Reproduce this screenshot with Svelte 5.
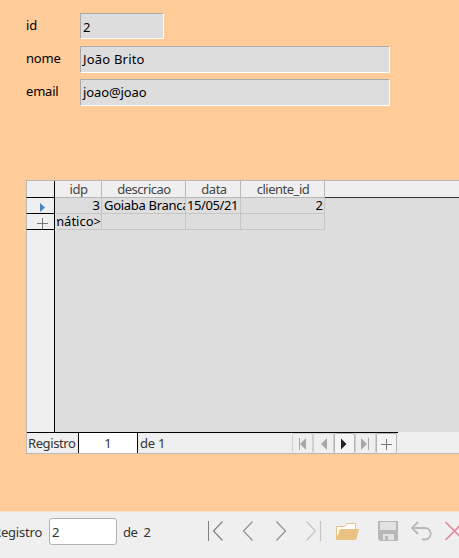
<script>
  const fields = [
    { label: 'id', value: '2', short: true },
    { label: 'nome', value: 'João Brito' },
    { label: 'email', value: 'joao@joao' }
  ];
  const columns = ['idp', 'descricao', 'data', 'cliente_id'];
</script>

<div class="window">
  <main>
    <section class="form">
      {#each fields as f}
        <div class="field" class:short={f.short}>
          <label for={f.label}>{f.label}</label>
          <div class="input" id={f.label}><span class={'v-' + f.label}>{f.value}</span></div>
        </div>
      {/each}
    </section>

    <section class="table">
      <div class="row head">
        <div class="marker"></div>
        {#each columns as c}
          <div class="cell"><span>{c}</span></div>
        {/each}
        <div class="rest"></div>
      </div>
      <div class="row">
        <div class="marker">
          <svg width="28" height="15"><path d="M14 5l5 4.500-5 4.500z" fill="#4a86c0" /></svg>
        </div>
        <div class="cell right"><span>3</span></div>
        <div class="cell"><span class="goiaba">Goiaba Branca</span></div>
        <div class="cell"><span class="date">15/05/21</span></div>
        <div class="cell right"><span>2</span></div>
      </div>
      <div class="row">
        <div class="marker">
          <svg width="28" height="15"><path d="M11 9.500h11M16.500 4v11" stroke="#777" /></svg>
        </div>
        <div class="cell right auto"><span>&lt;AutoCampo automático&gt;</span></div>
        <div class="cell"></div>
        <div class="cell"></div>
        <div class="cell"></div>
      </div>
      <div class="row fill"><div class="marker"></div></div>
      <footer>
        <div class="pager">
          <span class="reg">Registro</span>
          <span class="num">1</span>
          <span class="of">de 1</span>
          <div class="buttons">
            <div class="btn off"><svg width="19" height="20"><path d="M6.500 4v12" stroke="#a8a8a8" /><path d="M13 4v12l-6-6z" fill="#a8a8a8" /></svg></div>
            <div class="btn off"><svg width="19" height="20"><path d="M13 4v12l-6-6z" fill="#a8a8a8" /></svg></div>
            <div class="btn"><svg width="19" height="20"><path d="M6 4.500v11l5.500-5.500z" fill="#222" /></svg></div>
            <div class="btn off"><svg width="19" height="20"><path d="M12.500 4v12" stroke="#a8a8a8" /><path d="M5 4v12l6-6z" fill="#a8a8a8" /></svg></div>
            <div class="btn"><svg width="19" height="20"><path d="M4 10.500h11M9.500 5v11" stroke="#777" /></svg></div>
          </div>
        </div>
      </footer>
    </section>
  </main>

  <nav>
    <span class="reg2">Registro</span>
    <div class="box">2</div>
    <span class="of2">de&nbsp; 2</span>
    <svg class="tools" width="259" height="46" fill="none">
      <g stroke="#808080" stroke-width="1.200">
        <path d="M8.500 9v20" stroke-width="1" />
        <path d="M22.500 9.500l-9 9.500 9 9.500" />
        <path d="M52.500 9.500l-9 9.500 9 9.500" stroke="#929292" />
        <path d="M76.500 9.500l9 9.500-9 9.500" stroke="#929292" />
        <path d="M106.500 9.500l9 9.500-9 9.500M120.500 9v20" stroke="#c4c4c4" />
      </g>
      <path d="M136.500 27.500v-13h8l3-3h8v6" fill="#fff" stroke="#eac282" />
      <path d="M140 17h19l-3 11h-20z" fill="#eac282" />
      <path d="M178 9h20v20h-18l-2-2z" fill="#b8b8b8" />
      <path d="M180 10h16v8h-16zM183 22h11v6h-11z" fill="#e2e2e2" />
      <path d="M185 24h3v4h-3z" fill="#b8b8b8" />
      <path d="M218 10l-6 6 6 6M212 16h13a5.500 5.500 0 0 1 0 11.500h-3" stroke="#b8b8b8" stroke-width="1.800" />
      <path d="M245.500 10l18 18M263.500 10l-18 18" stroke="#e68a9c" stroke-width="1.700" />
    </svg>
  </nav>
</div>

<style>
  .window {
    width: 459px;
    height: 558px;
    overflow: hidden;
    display: flex;
    flex-direction: column;
    background: #ffcc99;
    color: #000;
    font: 13px/16px 'Noto Sans', 'Open Sans', sans-serif;
    white-space: nowrap;
  }
  * { box-sizing: border-box; }
  main { height: 511px; padding: 13px 0 0 26px; }
  .form { height: 167px; display: flex; flex-direction: column; gap: 6px; }
  .field { display: flex; height: 27px; }
  .field.short { padding-bottom: 1px; }
  label { width: 54px; padding-top: 4px; letter-spacing: -0.2px; }
  .input {
    width: 310px;
    padding: 4px 2px;
    background: #ddd;
    border: 1px solid #aaa;
    border-right-color: #fff;
    border-bottom-color: #fff;
  }
  .short .input { width: 84px; padding-top: 5px; }
  .v-nome { letter-spacing: 0.2px; }
  .v-email { letter-spacing: -0.1px; }

  .table {
    width: 433px;
    height: 274px;
    display: flex;
    flex-direction: column;
    background: #ddd;
    border: 1px solid #b8b8b8;
    border-right: 0;
  }
  .row { display: flex; height: 16px; flex: none; }
  .head { height: 17px; color: #444; letter-spacing: -0.5px; }
  .marker {
    width: 29px;
    flex: none;
    margin-left: -1px;
    background: #efefef;
    border-right: 1px solid #000;
    border-bottom: 1px solid #000;
    border-left: 1px solid #b8b8b8;
  }
  .marker svg { display: block; margin-left: -1px; }
  .cell {
    flex: none;
    display: flex;
    overflow: hidden;
    padding: 0 2px;
    line-height: 15px;
    border-right: 1px solid #c6c6c6;
    border-bottom: 1px solid #c6c6c6;
  }
  .cell:nth-child(2) { width: 47px; }
  .cell:nth-child(3) { width: 84px; }
  .cell:nth-child(4) { width: 55px; padding: 0 1px; }
  .cell:nth-child(5) { width: 84px; }
  .right { justify-content: flex-end; padding-right: 1px; }
  .cell.right.auto { padding-right: 0; margin-left: 2px; width: 45px; }
  .goiaba { letter-spacing: -0.3px; }
  .date { letter-spacing: -0.4px; }
  .head .cell { justify-content: center; padding-left: 3px; line-height: 17px; background: #efefef; border-color: #b8b8b8; }
  .rest { flex: 1; background: #efefef; border-bottom: 1px solid #333; }
  .fill { flex: 1; }
  .fill .marker { border-bottom: 0; }
  footer { height: 21px; flex: none; display: flex; background: #efefef; color: #333; }
  .pager { width: 371px; height: 21px; display: flex; border-top: 1px solid #000; line-height: 21px; }
  .reg { width: 52px; padding-left: 1px; letter-spacing: -0.4px; border-right: 1px solid #000; }
  .num { width: 59px; text-align: center; background: #fff; border-right: 1px solid #000; }
  .of { flex: 1; padding-left: 2px; letter-spacing: -0.2px; }
  .buttons { display: flex; margin-right: 1px; }
  .btn { width: 21px; height: 20px; border: 1px solid #b4b4b4; border-bottom: 0; border-radius: 2px; background: #f4f4f4; }
  .btn.off { border-color: #cfcfcf; background: #efefef; }
  .btn svg { display: block; }

  nav {
    height: 47px;
    display: flex;
    background: #efefef;
    border-top: 1px solid #f7dfc8;
    color: #333;
  }
  .reg2 { width: 56px; margin-left: -7px; padding-top: 12px; letter-spacing: -0.2px; }
  .box {
    width: 68px;
    height: 27px;
    margin-top: 6px;
    padding: 5px 2px;
    background: #fff;
    border: 1px solid #b2b2b2;
    border-radius: 3px;
  }
  .of2 { width: 83px; padding: 12px 0 0 6px; letter-spacing: -0.4px; }
  .tools { flex: none; }
</style>
